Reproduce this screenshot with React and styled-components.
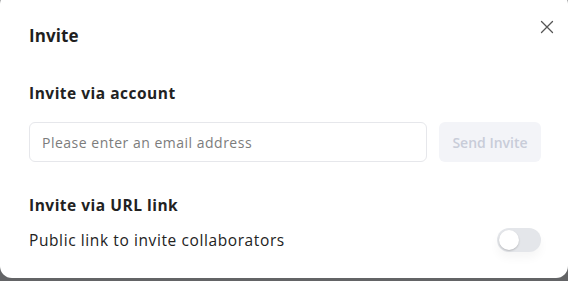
import styled, { createGlobalStyle } from 'styled-components';

const GlobalStyle = createGlobalStyle`
  html, body {
    margin: 0;
    padding: 0;
  }
  body {
    font-family: "Open Sans", "Liberation Sans", sans-serif;
    background: #636466;
  }
  * {
    box-sizing: border-box;
  }
`;

function App() {
  return (
    <>
      <GlobalStyle />
      <Overlay>
        <Modal>
          <Header>
            <Title>Invite</Title>
            <CloseButton aria-label="Close">
              <svg width="14" height="14" viewBox="0 0 14 14" fill="none">
                <path d="M1.5 1.5L12.5 12.5M12.5 1.5L1.5 12.5" stroke="#555" strokeWidth="1.3" strokeLinecap="round" />
              </svg>
            </CloseButton>
          </Header>

          <SectionTitle $top={29}>Invite via account</SectionTitle>
          <InviteRow>
            <EmailInput type="email" placeholder="Please enter an email address" />
            <SendButton disabled>Send Invite</SendButton>
          </InviteRow>

          <SectionTitle $top={31}>Invite via URL link</SectionTitle>
          <LinkRow>
            <LinkLabel>Public link to invite collaborators</LinkLabel>
            <Toggle aria-label="Public link">
              <Knob />
            </Toggle>
          </LinkRow>
        </Modal>
      </Overlay>
    </>
  );
}

export default App;

const Overlay = styled.div`
  height: 281px;
  overflow: hidden;
  display: flex;
  align-items: flex-end;
  padding-bottom: 3px;
`;

const Modal = styled.div`
  position: relative;
  width: 568px;
  height: 286px;
  flex-shrink: 0;
  background: #fff;
  border-radius: 12px;
  padding: 28px 27px 26px 29px;
  display: flex;
  flex-direction: column;
`;

const Header = styled.div`
  display: flex;
  align-items: center;
  height: 32px;
`;

const Title = styled.h2`
  margin: 0;
  font-size: 17px;
  font-weight: 700;
  color: #1f1f1f;
  line-height: 32px;
  letter-spacing: 0.1px;
`;

const CloseButton = styled.button`
  position: absolute;
  top: 28px;
  right: 14px;
  width: 14px;
  height: 14px;
  padding: 0;
  border: none;
  background: none;
  cursor: pointer;
  display: flex;
  align-items: center;
  justify-content: center;
`;

const SectionTitle = styled.h3`
  margin: ${(p) => p.$top}px 0 0;
  font-size: 15.5px;
  font-weight: 700;
  color: #222;
  line-height: 24px;
  letter-spacing: 0.5px;
`;

const InviteRow = styled.div`
  display: flex;
  gap: 12px;
  margin-top: 17px;
`;

const EmailInput = styled.input`
  flex: 1;
  height: 40px;
  padding: 0 12px;
  border: 1px solid #e6e7eb;
  border-radius: 6px;
  font-family: inherit;
  font-size: 14px;
  letter-spacing: 0.5px;
  color: #222;
  outline: none;

  &::placeholder {
    color: #7c7c7c;
  }
`;

const SendButton = styled.button`
  width: 102px;
  height: 40px;
  border: none;
  border-radius: 6px;
  background: #f3f4f8;
  color: #c8ccd8;
  font-family: inherit;
  font-size: 14px;
  font-weight: 600;
  cursor: not-allowed;
`;

const LinkRow = styled.div`
  display: flex;
  align-items: center;
  justify-content: space-between;
  margin-top: 11px;
  height: 24px;
`;

const LinkLabel = styled.span`
  font-size: 15.5px;
  color: #222;
  letter-spacing: 0.6px;
`;

const Toggle = styled.button`
  width: 44px;
  height: 24px;
  padding: 2px;
  border: none;
  border-radius: 12px;
  background: #e4e6ea;
  display: flex;
  align-items: center;
  cursor: pointer;
  box-shadow: 0 6px 10px rgba(0, 0, 0, 0.04);
`;

const Knob = styled.span`
  width: 20px;
  height: 20px;
  border-radius: 50%;
  background: #fff;
  box-shadow: 0 1px 2px rgba(0, 0, 0, 0.2);
`;
